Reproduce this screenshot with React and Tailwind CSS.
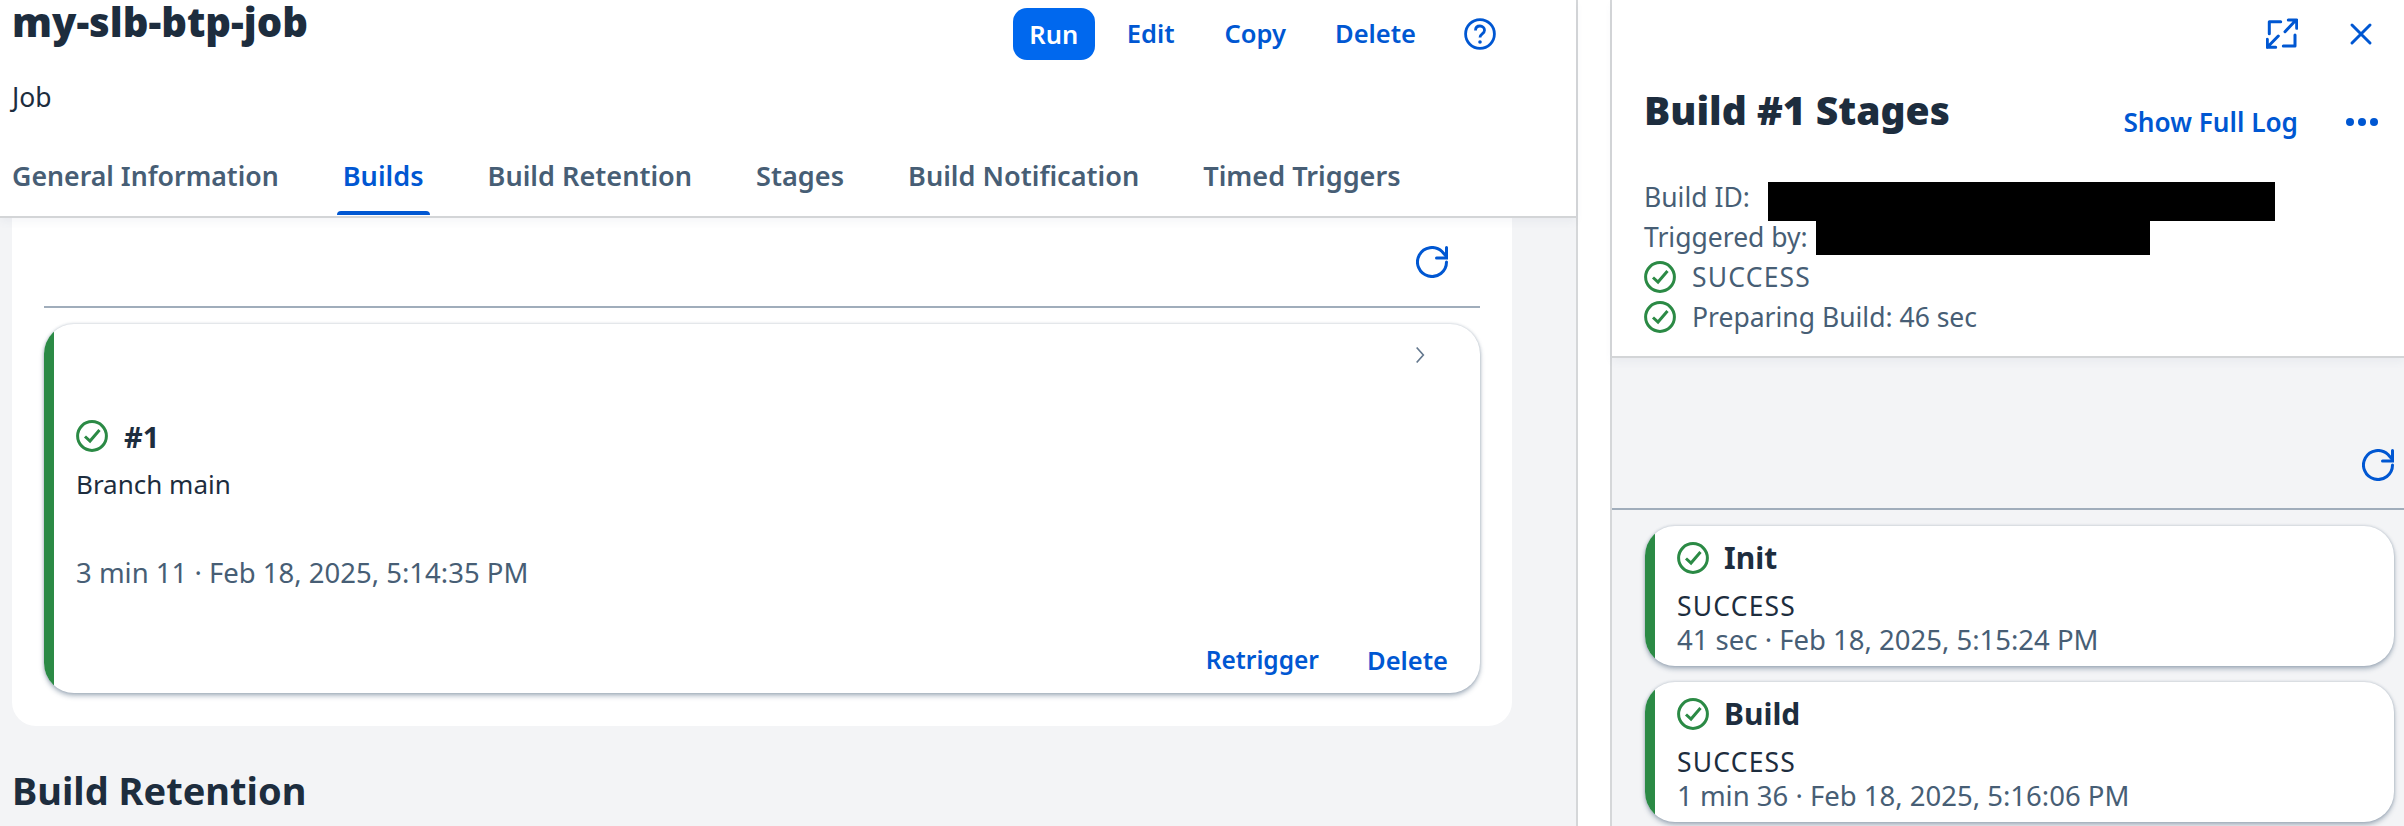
import React from "react";

const CheckCircle = ({ className }) => (
  <svg viewBox="0 0 32 32" className={className} fill="none" stroke="#2b8a45" strokeWidth="3">
    <circle cx="16" cy="16" r="14.4" />
    <path d="M9 16.500l5 4.500 9.500-11" />
  </svg>
);

const Refresh = ({ className }) => (
  <svg viewBox="0 0 32 32" className={className} fill="none" stroke="#0057d2" strokeWidth="3" strokeLinecap="round">
    <path d="M30.500 16A14.500 14.500 0 1 1 26 5.500L30 10" />
    <path d="M30.500 1.500V12H20.500" />
  </svg>
);

const Link = ({ children, className = "text-[25.5px]" }) => (
  <button className={`text-[#0057d2] font-semibold leading-none whitespace-nowrap ${className}`}>{children}</button>
);

const tabs = ["General Information", "Builds", "Build Retention", "Stages", "Build Notification", "Timed Triggers"];

const Card = ({ className = "", children }) => (
  <div className={`flex overflow-hidden rounded-[30px] bg-white shadow-[0_0_3px_rgba(85,107,130,0.35),0_3px_5px_rgba(85,107,130,0.45)] ${className}`}>
    <div className="w-[10px] shrink-0 bg-[#2b8a45]" />
    {children}
  </div>
);

const StageCard = ({ title, time }) => (
  <Card className="h-[140px] shrink-0">
    <div className="pl-[22px] pt-[16px]">
      <div className="flex items-center gap-[15px] h-[32px]">
        <CheckCircle className="w-[32px] h-[32px]" />
        <span className="text-[30px] font-bold text-[#1d2d3e] leading-none">{title}</span>
      </div>
      <div className="mt-[16px] text-[26.5px] tracking-[1.2px] leading-[33px] text-[#1d2d3e]">SUCCESS</div>
      <div className="text-[27.5px] leading-[33px] text-[#475e75] whitespace-nowrap">{time}</div>
    </div>
  </Card>
);

export default function App() {
  return (
    <div className="flex h-[826px] w-[2404px] overflow-hidden bg-white font-['Noto_Sans','Open_Sans',sans-serif] text-[#1d2d3e]">
      {/* job page */}
      <div className="w-[1578px] shrink-0 flex flex-col border-r-2 border-[#d5d7d9] bg-[#f3f4f6]">
        <div className="relative z-10 h-[218px] shrink-0 bg-white border-b-2 border-[#d3d5d7] px-[12px] shadow-[0_4px_8px_rgba(85,107,130,0.06)]">
          <div className="flex items-start justify-between h-[68px]">
            <h1 className="text-[40px] font-black leading-none text-[#1d2d3e] mt-[2px]">my-slb-btp-job</h1>
            <div className="flex items-center mt-[8px] mr-[68px]">
              <button className="w-[82px] h-[52px] rounded-[14px] bg-[#0068ee] text-white text-[25.5px] font-semibold">Run</button>
              <Link className="ml-[32px] text-[25.5px]">Edit</Link>
              <Link className="ml-[50px] text-[25.5px]">Copy</Link>
              <Link className="ml-[49px] text-[25.5px]">Delete</Link>
              <svg viewBox="0 0 32 32" className="w-[32px] h-[32px] ml-[48px]" fill="none" stroke="#0057d2" strokeWidth="2.8">
                <circle cx="16" cy="16" r="14.400" />
                <path d="M11.500 12.500c0-3 2-4.500 4.500-4.500s4.500 1.700 4.500 4.200c0 3.800-4.500 3.600-4.500 7.300" />
                <circle cx="16" cy="24" r="1.800" fill="#0057d2" stroke="none" />
              </svg>
            </div>
          </div>
          <div className="text-[26.5px] leading-none mt-[16px] text-[#1d2d3e]">Job</div>
          <div className="flex items-center h-[27px] gap-[64px] mt-[53px]">
            {tabs.map((label) => (
              <div key={label} className="relative">
                <span className={`font-semibold leading-none whitespace-nowrap ${label === "General Information" ? "text-[26.7px]" : "text-[27.1px]"} ${label === "Builds" ? "text-[#0057d2]" : "text-[#475e75]"}`}>{label}</span>
                {label === "Builds" && (
                  <div className="absolute -left-[6px] -right-[6px] top-[49px] h-[4px] rounded-t bg-[#0057d2]" />
                )}
              </div>
            ))}
          </div>
        </div>

        <div className="ml-[12px] w-[1500px] h-[508px] shrink-0 rounded-b-[24px] bg-white px-[32px]">
          <div className="h-[90px] border-b-2 border-[#a0adbb] flex justify-end pr-[32px] pt-[28px]">
            <Refresh className="w-[32px] h-[32px]" />
          </div>
          <Card className="mt-[16px] h-[369px] relative">
            <svg viewBox="0 0 12 24" className="absolute right-[54px] top-[21px] w-[12px] h-[20px]" fill="none" stroke="#64788e" strokeWidth="2">
              <path d="M2 3l8 9-8 9" />
            </svg>
            <div className="flex-1 flex flex-col pl-[22px] pr-[32px]">
              <div className="flex items-center gap-[16px] mt-[96px] h-[32px]">
                <CheckCircle className="w-[32px] h-[32px]" />
                <span className="text-[29px] font-bold leading-none">#1</span>
              </div>
              <div className="text-[26px] leading-none mt-[19px]">Branch main</div>
              <div className="text-[27.5px] leading-none mt-[62px] text-[#475e75]">3 min 11 · Feb 18, 2025, 5:14:35 PM</div>
              <div className="flex justify-end gap-[48px] mt-auto mb-[20px]">
                <Link className="text-[24.5px]">Retrigger</Link>
                <Link className="text-[25.5px]">Delete</Link>
              </div>
            </div>
          </Card>
        </div>
        <h2 className="mt-[45px] ml-[12px] text-[38px] font-bold leading-none text-[#1d2d3e]">Build Retention</h2>
      </div>

      {/* stages panel */}
      <div className="ml-[32px] flex-1 flex flex-col border-l-2 border-[#d5d7d9] bg-[#f3f4f6]">
        <div className="relative h-[358px] shrink-0 bg-white border-b-2 border-[#d3d5d7] pl-[32px] pr-[26px] shadow-[0_4px_8px_rgba(85,107,130,0.06)]">
          <div className="flex justify-end items-center gap-[51px] pt-[18px] pr-[5px]">
            <svg viewBox="0 0 32 32" className="w-[32px] h-[32px]" fill="none" stroke="#0057d2" strokeWidth="3" strokeLinecap="round" strokeLinejoin="round">
              <path d="M3.300 15.700V3.700H14.700M29 17V28H17.300" />
              <path d="M19 13.700L30 2M22.300 2H30.700V10.300" />
              <path d="M12.300 18L1.300 29.300M1.300 21.300V29.300H9.700" />
            </svg>
            <svg viewBox="0 0 24 24" className="w-[24px] h-[24px]" fill="none" stroke="#0057d2" strokeWidth="3" strokeLinecap="round">
              <path d="M3 3l18 18M21 3L3 21" />
            </svg>
          </div>
          <div className="flex items-start justify-between mt-[40px]">
            <h2 className="text-[39px] font-black leading-none">Build #1 Stages</h2>
            <div className="flex items-center gap-[48px] mt-[19px]">
              <Link className="text-[26.2px]">Show Full Log</Link>
              <div className="flex gap-[4px]">
                <span className="w-[8px] h-[8px] rounded-full bg-[#0057d2]" />
                <span className="w-[8px] h-[8px] rounded-full bg-[#0057d2]" />
                <span className="w-[8px] h-[8px] rounded-full bg-[#0057d2]" />
              </div>
            </div>
          </div>
          <div className="mt-[42px] text-[26.5px] leading-[40px] text-[#475e75]">
            <div>Build ID:</div>
            <div>Triggered by:</div>
            <div className="flex items-center gap-[16px]">
              <CheckCircle className="w-[32px] h-[32px]" />
              <span className="tracking-[1.2px]">SUCCESS</span>
            </div>
            <div className="flex items-center gap-[16px]">
              <CheckCircle className="w-[32px] h-[32px]" />
              <span>Preparing Build: 46 sec</span>
            </div>
          </div>
          {/* redacted values */}
          <div className="absolute left-[156px] top-[182px] w-[507px] h-[39px] bg-black" />
          <div className="absolute left-[204px] top-[221px] w-[334px] h-[34px] bg-black" />
        </div>
        <div className="h-[152px] shrink-0 border-b-2 border-[#a0adbb] flex justify-end items-end pb-[27px] pr-[10px]">
          <Refresh className="w-[32px] h-[32px]" />
        </div>
        <div className="flex flex-col gap-[16px] pt-[16px] pl-[33px] pr-[10px]">
          <StageCard title="Init" time="41 sec · Feb 18, 2025, 5:15:24 PM" />
          <StageCard title="Build" time="1 min 36 · Feb 18, 2025, 5:16:06 PM" />
        </div>
      </div>
    </div>
  );
}
